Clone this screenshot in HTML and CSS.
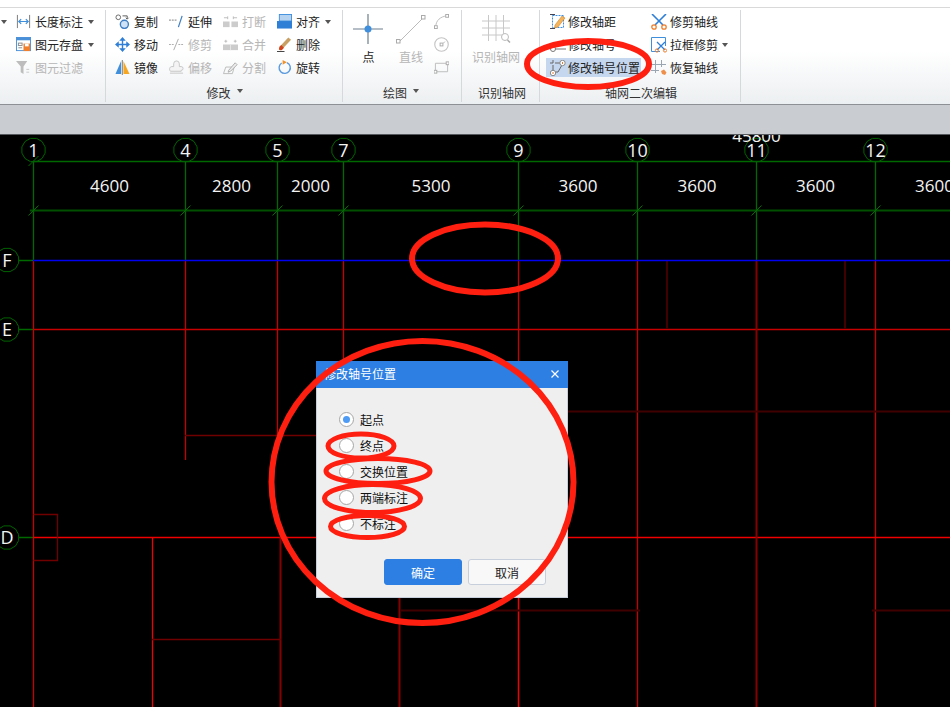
FILE: index.html
```html
<!DOCTYPE html>
<html lang="zh-CN">
  <head>
    <meta charset="UTF-8" />
    <title>修改轴号位置</title>
    <link rel="stylesheet" href="styles.css">
  </head>
  <body>
    <div class="top-strip"></div>

    <!-- Ribbon -->
    <div class="ribbon">
      <div class="rb-group group-dim">
        <div class="rb-body">
          <div class="rb-col col-stub"><div class="rb-item"><i class="caret"></i></div></div>
          <div class="rb-col">
            <div class="rb-item">
              <svg class="ico" viewBox="0 0 16 16"><path d="M1.500 1v14M14.500 1v14" stroke="#777" fill="none"/><path d="M3 8h10M5.500 5.500 3 8l2.500 2.500M10.500 5.500 13 8l-2.500 2.500" stroke="#3f8fdc" stroke-width="1.300" fill="none"/></svg>
              <span>长度标注</span><i class="caret caret-gap"></i>
            </div>
            <div class="rb-item">
              <svg class="ico" viewBox="0 0 16 16"><rect x="0.500" y="0.500" width="15" height="14" fill="#fff" stroke="#4a90d9"/><rect x="0.500" y="0.500" width="15" height="3" fill="#4a90d9"/><rect x="2.500" y="6.500" width="4" height="2.500" fill="none" stroke="#888"/><path d="M2.500 11.500h4" stroke="#888"/><rect x="8" y="7" width="7" height="8" fill="#f07f2e"/><rect x="9.500" y="7" width="4" height="3" fill="#fff"/></svg>
              <span>图元存盘</span><i class="caret caret-gap"></i>
            </div>
            <div class="rb-item off">
              <svg class="ico" viewBox="0 0 16 16"><path d="M0 1h12L8 7v8L5 13V7z" fill="#bdbdbd"/><path d="M11 10h3M11 13h3" stroke="#c8c8c8"/></svg>
              <span>图元过滤</span>
            </div>
          </div>
        </div>
        <div class="rb-title"></div>
      </div>

      <div class="rb-group group-edit">
        <div class="rb-body">
          <div class="rb-col col-edit">
            <div class="rb-item">
              <svg class="ico" viewBox="0 0 16 16"><circle cx="3.500" cy="3.500" r="2.500" fill="#fff" stroke="#666"/><circle cx="10" cy="11" r="4.300" fill="#cfe2f6" stroke="#3f7fc4" stroke-width="1.500"/><path d="M8 2h5v3M11.500 4l1.500 1.500L14.500 4" stroke="#555" fill="none"/></svg>
              <span>复制</span>
            </div>
            <div class="rb-item">
              <svg class="ico" viewBox="0 0 16 16"><path d="M8 0 4.500 4h7zM8 16l-3.500-4h7zM0 8l4-3.500v7zM16 8l-4-3.500v7z" fill="#2f7fd6"/><path d="M8 3v10M3 8h10" stroke="#2f7fd6" stroke-width="1.500"/></svg>
              <span>移动</span>
            </div>
            <div class="rb-item">
              <svg class="ico" viewBox="0 0 16 16"><path d="M6.500 1v14H0.500z" fill="#3f8fdc"/><path d="M9 1v14H15.500z" fill="#f5a623"/><path d="M7.800 0v16" stroke="#777"/></svg>
              <span>镜像</span>
            </div>
          </div>
          <div class="rb-col col-edit">
            <div class="rb-item">
              <svg class="ico" viewBox="0 0 16 16"><path d="M0 6.500h9" stroke="#777" stroke-dasharray="2 1" fill="none"/><path d="M10 14 14 2" stroke="#3f7fc4" stroke-width="1.300"/></svg>
              <span>延伸</span>
            </div>
            <div class="rb-item off">
              <svg class="ico" viewBox="0 0 16 16"><path d="M0 8h5M10 8h6" stroke="#aaa" stroke-dasharray="2 1"/><path d="M5 14 10 2" stroke="#aaa"/></svg>
              <span>修剪</span>
            </div>
            <div class="rb-item off">
              <svg class="ico" viewBox="0 0 16 16"><path d="M5 7V4a3 3 0 0 1 6 0v3h2a2 2 0 0 1 0 4v1H2c-2 0-2-5 1-5z" fill="#f4f4f4" stroke="#c4c4c4"/><path d="M1 14h14" stroke="#c4c4c4"/></svg>
              <span>偏移</span>
            </div>
          </div>
          <div class="rb-col col-edit">
            <div class="rb-item off">
              <svg class="ico" viewBox="0 0 16 16"><rect x="0" y="8" width="7" height="6" fill="#ccc"/><rect x="9" y="8" width="7" height="6" fill="#ccc"/><path d="M1 4h4M11 4h4M5 2.500v3M11 2.500v3" stroke="#bbb"/></svg>
              <span>打断</span>
            </div>
            <div class="rb-item off">
              <svg class="ico" viewBox="0 0 16 16"><rect x="0" y="8" width="16" height="6" fill="#ccc"/><path d="M8 8v6" stroke="#e6e6e6"/><path d="M3 3v3M13 3v3M1.500 4.500h3M11.500 4.500h3" stroke="#bbb"/></svg>
              <span>合并</span>
            </div>
            <div class="rb-item off">
              <svg class="ico" viewBox="0 0 16 16"><path d="M0.500 14.500 3 7.500h9l-2 7z" fill="none" stroke="#bbb"/><path d="M6 11l7-8 2 2-7 7-2.500 1z" fill="#eee" stroke="#aaa"/></svg>
              <span>分割</span>
            </div>
          </div>
          <div class="rb-col col-edit">
            <div class="rb-item">
              <svg class="ico" viewBox="0 0 16 16"><rect x="2.500" y="0.500" width="13" height="7" fill="#b5d2f0" stroke="#3f8fdc"/><rect x="0" y="7.500" width="16" height="8" fill="#2f7fd6"/></svg>
              <span>对齐</span><i class="caret caret-gap"></i>
            </div>
            <div class="rb-item">
              <svg class="ico" viewBox="0 0 16 16"><path d="M4 9 12 0.500l3 2.500-8 8.500z" fill="#c8a064"/><path d="M2.500 10.500 4.500 8.500l3 3-2 2c-1.500 1-3 .500-3.500-.500z" fill="#d0451b"/><path d="M0 15.500h8" stroke="#333"/></svg>
              <span>删除</span>
            </div>
            <div class="rb-item">
              <svg class="ico" viewBox="0 0 16 16"><path d="M5 3.200a6 6 0 1 0 5.500-.500" fill="none" stroke="#5a9ade" stroke-width="1.500"/><path d="M6 0v5L10.500 2.500z" fill="#f0932b"/></svg>
              <span>旋转</span>
            </div>
          </div>
        </div>
        <div class="rb-title title-left">修改<i class="caret caret-title"></i></div>
      </div>

      <div class="rb-group group-draw">
        <div class="rb-body">
          <div class="rb-big big-point">
            <svg class="ico-big" viewBox="0 0 30 30"><path d="M15 0v30M0 15h30" stroke="#6d7f8e" stroke-width="1.200"/><circle cx="15" cy="15" r="3.500" fill="#3f8fdc"/></svg>
            <span>点</span>
          </div>
          <div class="rb-big big-line off">
            <svg class="ico-big" viewBox="0 0 30 30"><path d="M3 28 27 4" stroke="#bbb"/><rect x="0.500" y="25.500" width="3.500" height="3.500" fill="#fff" stroke="#aaa"/><rect x="25.500" y="1.500" width="3.500" height="3.500" fill="#fff" stroke="#aaa"/></svg>
            <span>直线</span>
          </div>
          <div class="rb-col col-mini">
            <div class="rb-item">
              <svg class="ico" viewBox="0 0 16 16"><path d="M2 13C2 7 7 2.500 14 2" fill="none" stroke="#bbb"/><rect x="0.500" y="12.500" width="3" height="3" fill="#fff" stroke="#aaa"/><rect x="12.500" y="0.500" width="3" height="3" fill="#fff" stroke="#aaa"/></svg>
            </div>
            <div class="rb-item">
              <svg class="ico" viewBox="0 0 16 16"><circle cx="8" cy="8" r="7.200" fill="none" stroke="#c4c4c4" stroke-width="1.200"/><rect x="6.500" y="6.500" width="3" height="3" fill="#fff" stroke="#aaa"/><path d="M9 7l3-2" stroke="#c4c4c4"/></svg>
            </div>
            <div class="rb-item">
              <svg class="ico" viewBox="0 0 16 16"><path d="M1.500 3.500h13v9h-13z" fill="none" stroke="#bbb"/><rect x="0" y="11" width="3" height="3" fill="#fff" stroke="#aaa"/><rect x="13" y="2" width="3" height="3" fill="#fff" stroke="#aaa"/></svg>
            </div>
          </div>
        </div>
        <div class="rb-title title-draw">绘图<i class="caret caret-title"></i></div>
      </div>

      <div class="rb-group group-grid">
        <div class="rb-body">
          <div class="rb-big big-grid off">
            <svg class="ico-big" viewBox="0 0 30 30"><path d="M7.500 1v26M15 1v26M22.500 1v20M1 7h28M1 14h28M1 21h20" stroke="#c8c8c8"/><circle cx="24" cy="23" r="3.500" fill="#fff" stroke="#bbb"/><path d="M26.500 26 29 28.500" stroke="#aaa" stroke-width="1.500"/></svg>
            <span>识别轴网</span>
          </div>
        </div>
        <div class="rb-title title-shift">识别轴网</div>
      </div>

      <div class="rb-group group-axis">
        <div class="rb-body">
          <div class="rb-col col-axis">
            <div class="rb-item">
              <svg class="ico ico-16" viewBox="0 0 16 16"><rect x="2.500" y="1.500" width="11" height="12" fill="#fff" stroke="#3f8fdc" stroke-dasharray="2 1"/><path d="M0 0.500h5M0 14.500h5" stroke="#445"/><path d="M5 11 12 2l3 2-7 9-3.500 1z" fill="#f5b45a" stroke="#c07b22" stroke-width="0.500"/></svg>
              <span>修改轴距</span>
            </div>
            <div class="rb-item">
              <svg class="ico ico-16" viewBox="0 0 16 16"><path d="M8 8 13 2l2 1.500-5 6z" fill="#f5b45a"/><circle cx="3" cy="12" r="2.500" fill="#fff" stroke="#777"/><path d="M5.500 12H16" stroke="#777"/></svg>
              <span>修改轴号</span>
            </div>
            <div class="rb-item rb-item-on">
              <svg class="ico ico-16" viewBox="0 0 16 16"><path d="M3 5v6M5 3h7M12 5l-4 7H5" fill="none" stroke="#666"/><path d="M0 3h3M3 0v3" stroke="#666"/><circle cx="12.500" cy="3" r="2.700" fill="#fff" stroke="#888"/><path d="M12.500 2v2" stroke="#e07b30"/><circle cx="3" cy="13" r="2.700" fill="#fff" stroke="#888"/><path d="M3 12v2" stroke="#e07b30"/></svg>
              <span>修改轴号位置</span>
            </div>
          </div>
          <div class="rb-col col-axis2">
            <div class="rb-item">
              <svg class="ico ico-16" viewBox="0 0 16 16"><path d="M1 0 12 11M15 0 4 11" stroke="#2f7fd6" stroke-width="1.600"/><circle cx="3" cy="13" r="2.200" fill="none" stroke="#ee7f2c" stroke-width="1.300"/><circle cx="13" cy="13" r="2.200" fill="none" stroke="#ee7f2c" stroke-width="1.300"/></svg>
              <span>修剪轴线</span>
            </div>
            <div class="rb-item">
              <svg class="ico ico-16" viewBox="0 0 16 16"><path d="M9 14.500H0.500v-14h14V9" fill="none" stroke="#3f8fdc"/><path d="M6 5l8 8M14 5l-8 8" stroke="#2f7fd6" stroke-width="1.300"/><circle cx="6" cy="13.500" r="1.600" fill="none" stroke="#ee7f2c"/><circle cx="14" cy="13.500" r="1.600" fill="none" stroke="#ee7f2c"/></svg>
              <span>拉框修剪</span><i class="caret caret-gap"></i>
            </div>
            <div class="rb-item">
              <svg class="ico ico-16" viewBox="0 0 16 16"><path d="M4.500 0v13M10.500 0v7M0 4.500h15M0 10.500h8" stroke="#9aa7b3"/><path d="M10 11l3-1.500 2.500 3-1.500 2.500-3-1z" fill="#ee8f4c"/></svg>
              <span>恢复轴线</span>
            </div>
          </div>
        </div>
        <div class="rb-title title-left">轴网二次编辑</div>
      </div>
    </div>

    <div class="status-band"></div>

    <!-- Drawing area -->
    <div class="cad">
      <svg class="cad-svg" viewBox="0 135 950 572" width="950" height="572">
        <defs>
          <polygon id="bubble" points="11.600,3.100 8.500,8.500 3.100,11.600 -3.100,11.600 -8.500,8.500 -11.600,3.100 -11.600,-3.100 -8.500,-8.500 -3.100,-11.600 3.100,-11.600 8.500,-8.500 11.600,-3.100" />
          <path id="tick" d="M-5 5 5 -5" />
        </defs>

        <g class="ln ln-red">
          <path d="M33.500 260V707M185.500 260V460M277.500 260V435M343.500 260V361M518.500 260V707M637.500 260V707M875.500 260V707" />
          <path d="M33 329.500H950" />
        </g>
        <g class="ln ln-bright">
          <path d="M33 537.500H950M152.500 537V707M518.500 597V707" />
        </g>
        <g class="ln ln-mid">
          <path d="M756.500 260V707M280.500 537V707M399.500 597V707" />
        </g>
        <g class="ln ln-dim">
          <path d="M185 435.500H316M152 639.500H281M33.500 514.500H57.500V560.500H33.500" />
        </g>
        <g class="ln ln-dark">
          <path d="M568 411.500H950M400 610.500H640M872 610.500H950M667 260V329M845 260V329" />
        </g>

        <g class="ln ln-green">
          <path d="M33.500 162V260M185.500 162V260M277.500 162V260M343.500 162V260M518.500 162V260M637.500 162V260M756.500 162V260M875.500 162V260" />
          <path d="M33 161.500H950M19 260.500H33M19 329.500H33M19 537.500H33" />
        </g>
        <path class="ln ln-green-thick" d="M30 210.500H950" />
        <g class="ln-tick">
          <use href="#tick" x="33.500" y="161" />
          <use href="#tick" x="33.500" y="210.500" />
          <use href="#tick" x="185.500" y="210.500" />
          <use href="#tick" x="277.500" y="210.500" />
          <use href="#tick" x="343.500" y="210.500" />
          <use href="#tick" x="518.500" y="210.500" />
          <use href="#tick" x="637.500" y="210.500" />
          <use href="#tick" x="756.500" y="210.500" />
          <use href="#tick" x="875.500" y="210.500" />
        </g>
        <path class="ln ln-blue" d="M33 260.500H950" />

        <g class="axis-bubbles">
          <use href="#bubble" x="33.500" y="150" />
          <use href="#bubble" x="185.500" y="150" />
          <use href="#bubble" x="277.500" y="150" />
          <use href="#bubble" x="343.500" y="150" />
          <use href="#bubble" x="518.500" y="150" />
          <use href="#bubble" x="637.500" y="150" />
          <use href="#bubble" x="756.500" y="150" />
          <use href="#bubble" x="875.500" y="150" />
          <use href="#bubble" x="7" y="260" />
          <use href="#bubble" x="7" y="329.500" />
          <use href="#bubble" x="7" y="537.500" />
        </g>

        <g class="axis-text">
          <text x="33.500" y="156.500">1</text>
          <text x="185.500" y="156.500">4</text>
          <text x="277.500" y="156.500">5</text>
          <text x="343.500" y="156.500">7</text>
          <text x="518.500" y="156.500">9</text>
          <text x="637.500" y="156.500">10</text>
          <text x="756.500" y="156.500">11</text>
          <text x="875.500" y="156.500">12</text>
          <text x="7" y="266.500">F</text>
          <text x="7" y="336">E</text>
          <text x="7" y="544">D</text>
        </g>

        <g class="dim-text">
          <text x="109.500" y="191.500">4600</text>
          <text x="231.500" y="191.500">2800</text>
          <text x="310.500" y="191.500">2000</text>
          <text x="431" y="191.500">5300</text>
          <text x="578" y="191.500">3600</text>
          <text x="697" y="191.500">3600</text>
          <text x="815.500" y="191.500">3600</text>
          <text x="934.500" y="191.500">3600</text>
          <text x="756.500" y="142">45800</text>
        </g>
      </svg>
    </div>

    <!-- Dialog -->
    <div class="dialog">
      <div class="dialog-head">
        <span>修改轴号位置</span>
        <svg class="dialog-close" viewBox="0 0 8 8"><path d="M0.500 0.500l7 7M7.500 0.500l-7 7" stroke="#fff" stroke-width="1.200"/></svg>
      </div>
      <div class="dialog-body">
        <div class="radio-row"><i class="radio radio-on"></i><span>起点</span></div>
        <div class="radio-row"><i class="radio"></i><span>终点</span></div>
        <div class="radio-row"><i class="radio"></i><span>交换位置</span></div>
        <div class="radio-row"><i class="radio"></i><span>两端标注</span></div>
        <div class="radio-row"><i class="radio"></i><span>不标注</span></div>
      </div>
      <div class="dialog-foot">
        <button type="button" class="btn btn-ok">确定</button>
        <button type="button" class="btn btn-cancel">取消</button>
      </div>
    </div>

    <!-- Red hand-drawn marks over everything -->
    <svg class="marks" viewBox="0 0 950 707" width="950" height="707">
      <ellipse cx="588" cy="64" rx="61" ry="23" />
      <ellipse cx="485" cy="258.500" rx="73" ry="34" />
      <ellipse cx="422.500" cy="482" rx="151" ry="141" />
      <ellipse class="mark-thin" cx="361" cy="446" rx="33" ry="12" />
      <ellipse class="mark-thin" cx="378" cy="471" rx="52" ry="12.500" />
      <ellipse class="mark-thin" cx="372.500" cy="498.500" rx="48" ry="14" />
      <ellipse class="mark-thin" cx="367.500" cy="526.500" rx="37" ry="11" />
    </svg>
  </body>
</html>
```

FILE: styles.css
```css
* {
  box-sizing: border-box;
}

html,
body {
  margin: 0;
  padding: 0;
  width: 950px;
  height: 707px;
  overflow: hidden;
}

body {
  position: relative;
  display: flex;
  flex-direction: column;
  background: #000;
  font-family: "Noto Sans CJK SC", "Liberation Sans", sans-serif;
  font-size: 12px;
  color: #222;
}

.top-strip {
  height: 8px;
  background: #fff;
  border-bottom: 1px solid #d9d9d9;
}

/* Ribbon */
.ribbon {
  display: flex;
  height: 97px;
  padding-top: 2px;
  background: linear-gradient(#fff 0, #fff 45%, #eceff1 100%);
  border-bottom: 1px solid #8d9094;
}

.rb-group {
  display: flex;
  flex-direction: column;
  height: 92px;
  border-right: 1px solid #d6d9dc;
}

.group-dim {
  width: 106px;
}

.group-edit {
  width: 237px;
  padding-left: 9px;
}

.group-draw {
  width: 119px;
}

.group-grid {
  width: 78px;
}

.group-axis {
  width: 201px;
  padding-left: 10px;
}

.rb-body {
  display: flex;
  height: 70px;
}

.rb-col {
  display: flex;
  flex-direction: column;
}

.rb-item {
  display: flex;
  align-items: center;
  gap: 4px;
  height: 23px;
  white-space: nowrap;
}

.off {
  color: #b6b6b6;
}

.ico {
  flex: none;
  width: 15px;
  height: 15px;
}

.ico-16 {
  width: 16px;
  height: 16px;
}

.col-stub {
  width: 16px;
  padding-left: 1px;
}

.col-edit {
  width: 54px;
}

.col-mini {
  width: 26px;
  padding-left: 5px;
}

.col-axis {
  width: 101px;
}

.col-axis .rb-item {
  gap: 2px;
}

.col-axis2 .rb-item {
  gap: 3px;
}

.rb-item-on {
  align-self: flex-start;
  height: 19px;
  margin: 2px 0 2px -4px;
  padding: 0 1px 0 4px;
  background: #c5d7ee;
}

.caret {
  display: inline-block;
  width: 0;
  height: 0;
  border-left: 3.500px solid transparent;
  border-right: 3.500px solid transparent;
  border-top: 4px solid #555;
}

.caret-gap {
  margin-left: 1px;
}

.caret-title {
  margin: 0 0 2px 6px;
}

.rb-title {
  display: flex;
  justify-content: center;
  align-items: center;
  height: 22px;
  padding-top: 2px;
  color: #333;
}

.title-draw {
  margin-left: -2px;
}

.title-shift {
  margin-left: 3px;
}

.title-left {
  margin-left: -8px;
}

.rb-big {
  display: flex;
  flex-direction: column;
  align-items: center;
}

.ico-big {
  width: 30px;
  height: 30px;
  margin: 4px 0 3px;
}

.rb-big span {
  line-height: 20px;
}

.big-point {
  width: 50px;
}

.big-point span {
  margin-left: 1px;
}

.big-line {
  width: 36px;
}

.big-grid {
  width: 48px;
  margin-left: 10px;
}

.status-band {
  height: 30px;
  background: #c9ccd0;
  border-bottom: 1px solid #55585c;
}

/* CAD canvas */
.cad {
  flex: 1;
  overflow: hidden;
}

.cad-svg {
  display: block;
}

.ln {
  fill: none;
  stroke-width: 1.300;
}

.ln-red {
  stroke: #c80000;
}

.ln-bright {
  stroke: #f00000;
}

.ln-mid {
  stroke: #860000;
  stroke-width: 2;
}

.ln-dim {
  stroke: #700000;
}

.ln-dark {
  stroke: #400000;
  stroke-width: 2;
}

.ln-green {
  stroke: #006a00;
}

.ln-green-thick {
  stroke: #005000;
  stroke-width: 2;
}

.ln-blue {
  stroke: #0000f0;
}

.ln-tick {
  fill: none;
  stroke: #007000;
}

.axis-bubbles {
  fill: none;
  stroke: #006400;
}

.axis-text,
.dim-text {
  fill: #f4f4f4;
  font-family: "Open Sans", "Liberation Sans", sans-serif;
  text-anchor: middle;
}

.axis-text {
  font-size: 18px;
}

.dim-text {
  font-size: 17px;
}

/* Dialog */
.dialog {
  position: absolute;
  left: 316px;
  top: 361px;
  display: flex;
  flex-direction: column;
  width: 252px;
  height: 237px;
  background: #efefef;
  border: 1px solid #c8cfdc;
  border-top: none;
}

.dialog-head {
  display: flex;
  justify-content: space-between;
  align-items: center;
  height: 27px;
  margin: 0 -1px;
  padding: 0 9px 2px 8px;
  background: #2d7fe3;
  color: #fff;
}

.dialog-close {
  width: 8px;
  height: 8px;
}

.dialog-body {
  display: flex;
  flex-direction: column;
  padding: 18px 0 0 22px;
}

.radio-row {
  display: flex;
  align-items: center;
  gap: 6px;
  height: 26px;
  color: #111;
}

.radio {
  display: flex;
  justify-content: center;
  align-items: center;
  width: 15px;
  height: 15px;
  background: #fff;
  border: 1px solid #a6a6a6;
  border-radius: 50%;
}

.radio-on::after {
  content: "";
  width: 7px;
  height: 7px;
  background: #4d9bf5;
  border-radius: 50%;
}

.dialog-foot {
  display: flex;
  justify-content: flex-end;
  gap: 6px;
  margin-top: 23px;
  padding-right: 21px;
}

.btn {
  width: 78px;
  height: 26px;
  padding: 0;
  border-radius: 3px;
  font-family: inherit;
  font-size: 12px;
}

.btn-ok {
  background: #2d7fe3;
  border: 1px solid #2d7fe3;
  color: #fff;
}

.btn-cancel {
  background: #f8f8f8;
  border: 1px solid #c8cfdc;
  color: #222;
}

/* Red marks */
.marks {
  position: absolute;
  left: 0;
  top: 0;
  pointer-events: none;
}

.marks ellipse {
  fill: none;
  stroke: #ff1f10;
  stroke-width: 6;
}

.marks .mark-thin {
  stroke-width: 5;
}
```
